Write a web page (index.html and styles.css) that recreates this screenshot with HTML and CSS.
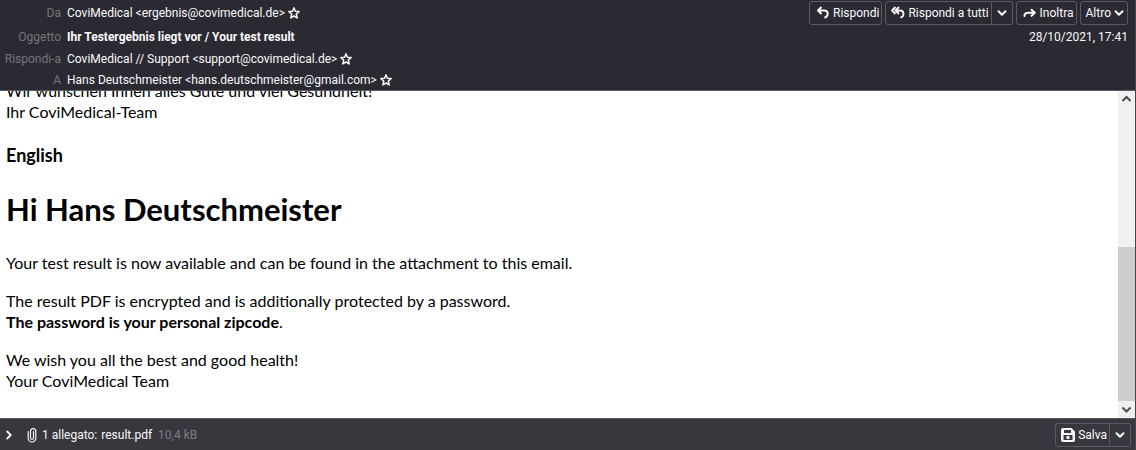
FILE: index.html
```html
<!DOCTYPE html>
<html lang="it">
<head>
<meta charset="utf-8">
<meta name="viewport" content="width=device-width, initial-scale=1">
<title>Ihr Testergebnis liegt vor / Your test result</title>
<link rel="stylesheet" href="styles.css">
</head>
<body>
<svg class="symbols" aria-hidden="true">
  <symbol id="star" viewBox="0 0 12 12"><path d="M6 .9l1.400 3.300 3.700.4-2.800 2.400.9 3.900L6 9 2.800 10.900l.9-3.900L.9 4.600l3.700-.4z" fill="none" stroke="currentColor" stroke-width="1.500" stroke-linejoin="round"/></symbol>
  <symbol id="down" viewBox="0 0 10 10"><path d="M1.500 3.200L5 6.700l3.500-3.500" fill="none" stroke="currentColor" stroke-width="2" stroke-linecap="round" stroke-linejoin="round"/></symbol>
</svg>
<header class="header">
  <dl class="fields">
    <div class="field">
      <dt>Da</dt>
      <dd>CoviMedical &lt;ergebnis@covimedical.de&gt;<button class="star" aria-label="Aggiungi ergebnis@covimedical.de"><svg><use href="#star"/></svg></button></dd>
    </div>
    <div class="field field-subject">
      <dt>Oggetto</dt>
      <dd>Ihr Testergebnis liegt vor / Your test result</dd>
    </div>
    <div class="field">
      <dt>Rispondi-a</dt>
      <dd>CoviMedical // Support &lt;support@covimedical.de&gt;<button class="star" aria-label="Aggiungi support@covimedical.de"><svg><use href="#star"/></svg></button></dd>
    </div>
    <div class="field">
      <dt>A</dt>
      <dd>Hans Deutschmeister &lt;hans.deutschmeister@gmail.com&gt;<button class="star" aria-label="Aggiungi hans.deutschmeister@gmail.com"><svg><use href="#star"/></svg></button></dd>
    </div>
  </dl>
  <div class="side">
    <div class="toolbar">
      <button class="btn"><svg class="icon" viewBox="0 0 14 14"><path d="M5.500 1L2 4.500 5.500 8M2.500 4.500H8c2.500 0 3.700 1.300 3.700 3.200S10.500 11 8.500 11.700" fill="none" stroke="currentColor" stroke-width="2" stroke-linejoin="round"/></svg>Rispondi</button>
      <div class="split">
        <button class="btn"><svg class="icon" viewBox="0 0 14 14"><path d="M4.500 1L1 4.500 4.500 8M8 1L4.500 4.500 8 8M5 4.500h3.500c2.700 0 4 1.300 4 3.200s-1 3.300-3 4" fill="none" stroke="currentColor" stroke-width="1.800" stroke-linejoin="round"/></svg>Rispondi a tutti</button>
        <button class="btn more" aria-label="Altre risposte"><svg class="chevron"><use href="#down"/></svg></button>
      </div>
      <button class="btn"><svg class="icon" viewBox="0 0 14 14"><path d="M1.500 10C1.500 7.800 3 6.800 5.500 6.800h6M8.500 3.800l3.300 3-3.300 3" fill="none" stroke="currentColor" stroke-width="2" stroke-linejoin="round" stroke-linecap="round"/></svg>Inoltra</button>
      <button class="btn other">Altro<svg class="chevron"><use href="#down"/></svg></button>
    </div>
    <time class="date" datetime="2021-10-28T17:41">28/10/2021, 17:41</time>
  </div>
</header>
<main class="message">
  <article class="content">
    <p>Wir wünschen Ihnen alles Gute und viel Gesundheit!<br>Ihr CoviMedical-Team</p>
    <h3>English</h3>
    <h1>Hi Hans Deutschmeister</h1>
    <p>Your test result is now available and can be found in the attachment to this email.</p>
    <p>The result PDF is encrypted and is additionally protected by a password.<br><b>The password is your personal zipcode</b>.</p>
    <p>We wish you all the best and good health!<br>Your CoviMedical Team</p>
  </article>
  <div class="scrollbar" aria-hidden="true">
    <svg class="arrow" viewBox="0 0 17 17"><path d="M4.500 10l4-4 4 4" fill="none" stroke="#505050" stroke-width="2.200"/></svg>
    <div class="track"><div class="thumb"></div></div>
    <svg class="arrow" viewBox="0 0 17 17"><path d="M4.500 6.500l4 4 4-4" fill="none" stroke="#505050" stroke-width="2.200"/></svg>
  </div>
</main>
<footer class="attachments">
  <button class="twisty" aria-label="Mostra allegati"><svg class="chevron" viewBox="0 0 10 10"><path d="M3.200 1.500L6.700 5 3.200 8.500" fill="none" stroke="currentColor" stroke-width="1.800" stroke-linecap="round" stroke-linejoin="round"/></svg></button>
  <svg class="clip" viewBox="0 0 10 16"><path d="M6.500 4.500v6.300a1.500 1.500 0 0 1-3 0V4M1.200 4.500v6.700a3.800 3.800 0 0 0 7.600 0V3.800a2.700 2.700 0 0 0-5.300 0" fill="none" stroke="currentColor" stroke-width="1.200" stroke-linecap="round"/></svg>
  <span>1 allegato:</span>
  <a class="file" href="#result">result.pdf</a>
  <span class="size">10,4 kB</span>
  <div class="split save">
    <button class="btn"><svg class="icon" viewBox="0 0 14 14"><path fill="currentColor" fill-rule="evenodd" d="M2 0h8.500L14 3.500V12a2 2 0 0 1-2 2H2a2 2 0 0 1-2-2V2a2 2 0 0 1 2-2zm1 2v3h7V2zm-.500 5v5h9V7z"/><circle cx="7" cy="9.500" r="1.700" fill="currentColor"/></svg>Salva</button>
    <button class="btn more" aria-label="Altre opzioni di salvataggio"><svg class="chevron"><use href="#down"/></svg></button>
  </div>
</footer>
</body>
</html>
```
FILE: styles.css
```css
* { box-sizing: border-box; }

body {
  margin: 0;
  height: 100vh;
  display: flex;
  flex-direction: column;
  background: #38373e;
  color: #f9f9fa;
  font: 12px/16px Roboto, "Open Sans", sans-serif;
  border-right: 1px solid #45444a;
}

button {
  font: inherit;
  color: inherit;
  background: none;
  border: 0;
  margin: 0;
  padding: 0;
}

svg { display: block; flex: none; }
.symbols { position: absolute; width: 0; height: 0; }

.header {
  flex: none;
  display: flex;
  justify-content: space-between;
  background: #2b2a33;
  border-bottom: 1px solid #5a595f;
}

.fields { margin: 0; padding: 5px 0 2px; }
.field { display: flex; gap: 6px; padding-bottom: 5px; }
.field:first-child { padding-bottom: 8px; }
.field:nth-child(2) { padding-bottom: 6px; }
.field:last-child { padding-bottom: 0; }
.field dt { width: 61px; text-align: right; color: #76757a; }
.field dd { margin: 0; display: flex; align-items: center; gap: 3px; white-space: nowrap; }
.field-subject dd { font-weight: 700; }
.star svg { width: 12px; height: 12px; }

.side {
  display: flex;
  flex-direction: column;
  align-items: flex-end;
  gap: 4px;
  padding: 1px 7px 0 0;
}

.toolbar { display: flex; gap: 3px; }

.btn {
  display: flex;
  align-items: center;
  gap: 3px;
  height: 24px;
  padding: 0 2px 0 6px;
  border: 1px solid #5b5a62;
  border-radius: 3px;
  white-space: nowrap;
}

.icon { width: 14px; height: 14px; }
.chevron { width: 10px; height: 10px; }
.other { padding: 0 3px 0 5px; }
.split { display: flex; }
.split .btn:first-child { border-radius: 3px 0 0 3px; padding-left: 5px; }
.split .more { border-left: 0; border-radius: 0 3px 3px 0; padding: 0 5px; }

.message {
  flex: 1;
  min-height: 0;
  display: flex;
  background: #fff;
  color: #000;
}

.content {
  flex: 1;
  min-width: 0;
  display: flex;
  flex-direction: column;
  justify-content: flex-end;
  overflow: hidden;
  padding: 0 6px 27px;
  font: 16px/21px Lato, sans-serif;
}

.content p { margin: 0 0 17px; }
.content p:last-child { margin: 0; }
.content h3 { margin: 4px 0 22px; font-size: 18px; line-height: 24px; }
.content h1 { margin: 0 0 23px; font-size: 31px; line-height: 40px; }

.scrollbar {
  flex: none;
  width: 17px;
  display: flex;
  flex-direction: column;
  background: #f0f0f0;
}

.arrow { width: 17px; height: 17px; }
.track { flex: 1; display: flex; flex-direction: column; justify-content: flex-end; }
.thumb { height: 52.5%; background: #cdcdcd; }

.attachments {
  flex: none;
  display: flex;
  align-items: center;
  height: 32px;
  padding: 0 4px;
  border-top: 1px solid #5a595f;
}

.clip { width: 10px; height: 16px; margin: 0 5px 0 13px; }
.file { color: inherit; text-decoration: none; margin: 0 6px 0 4px; }
.size { color: #807f85; }
.save { margin-left: auto; }
```
